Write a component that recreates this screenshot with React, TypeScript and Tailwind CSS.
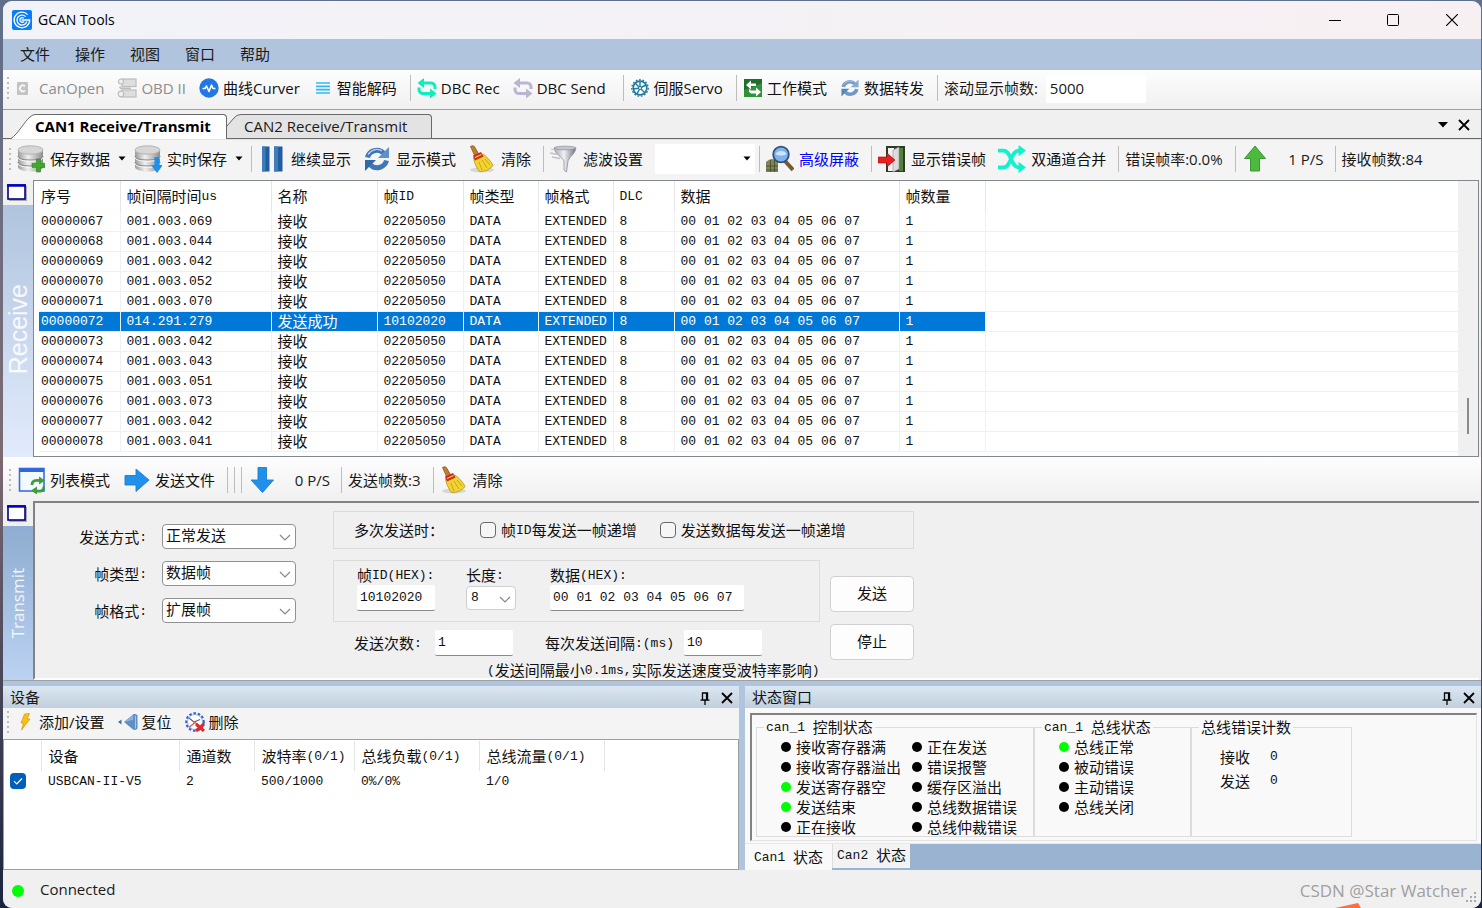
import { useState } from "react";
import type { ReactNode } from "react";

const UI = 'font-["Open_Sans","Noto_Sans_CJK_SC",sans-serif]';
const SIM = 'font-["Liberation_Mono","Noto_Sans_CJK_SC",monospace]';

/* ---------- small helpers ---------- */

// Chinese runs stay at 15px, latin runs drop to the narrow mono size
function Mixed({ text }: { text: string }) {
  const parts = text.split(/([\x20-\x7e]+)/).filter(Boolean);
  return (
    <span className="flex items-center whitespace-pre">
      {parts.map((p, i) =>
        /^[\x20-\x7e]/.test(p) ? (
          <span key={i} className="text-[13px] leading-4 pt-0.5">{p}</span>
        ) : (
          <span key={i} className='text-[15px] font-["Noto_Sans_CJK_SC",sans-serif]'>{p}</span>
        )
      )}
    </span>
  );
}

function Grip() {
  return (
    <div className="flex flex-col gap-[3px] shrink-0 w-1 mr-1">
      {[0, 1, 2, 3, 4].map((i) => (
        <span key={i} className="block w-[2px] h-[2px] bg-[#bdbdbd]" />
      ))}
    </div>
  );
}

function Sep({ wide }: { wide?: boolean }) {
  return <span className={`w-px h-[26px] bg-[#bdbdbd] shrink-0 mr-[6px] ${wide ? "ml-1" : ""}`} />;
}

function Tool({ icon, label, disabled, blue, big }: {
  icon: ReactNode;
  label: string;
  disabled?: boolean;
  blue?: boolean;
  big?: boolean;
}) {
  return (
    <button
      disabled={disabled}
      className={`flex items-center shrink-0 whitespace-nowrap ${big ? "gap-[5px] mr-3" : "gap-1 mr-[13px]"} ${
        disabled ? "text-[#8d8d8d]" : blue ? "text-[#0000ff]" : "text-[#111]"
      }`}
    >
      {icon}
      {label}
    </button>
  );
}

function Caret() {
  return (
    <svg width="8" height="5" viewBox="0 0 8 5" aria-hidden="true">
      <path d="M0.5 0.5h7L4 4.5z" fill="#000" />
    </svg>
  );
}

function CloseX({ size = 12 }: { size?: number }) {
  return (
    <svg width={size} height={size} viewBox="0 0 12 12" aria-hidden="true">
      <path d="M1 1l10 10M11 1L1 11" stroke="#000" strokeWidth="1.8" />
    </svg>
  );
}

/* ---------- icons ---------- */

const LogoIcon = () => (
  <svg width="20" height="20" viewBox="0 0 20 20">
    <rect width="20" height="20" rx="2" fill="#0a7cf5" />
    <g fill="none" stroke="#fff" strokeWidth="1.3">
      <path d="M15.600 4.600A7.800 7.800 0 1 0 17.700 10H9.500" />
      <path d="M13.600 6.600A5 5 0 1 0 14.800 11.500" />
      <path d="M11.800 8.300a2.300 2.300 0 1 0 .3 3" />
    </g>
  </svg>
);

const CanOpenIcon = () => (
  <svg width="20" height="20" viewBox="0 0 20 20">
    <rect x="2" y="4" width="11" height="13" rx="1" fill="#c2c2c2" />
    <path d="M10 8.200A3 3 0 1 0 10 12.600" fill="none" stroke="#f5f5f5" strokeWidth="2" />
  </svg>
);

const ObdIcon = () => (
  <svg width="20" height="20" viewBox="0 0 20 20" fill="#dedede" stroke="#bdbdbd" strokeWidth="1.200">
    <rect x="5" y="1" width="14" height="7.500" />
    <rect x="5" y="12" width="14" height="7" />
    <path d="M3 8.500c0 2 1 1.800 3 1.800h8" fill="none" strokeWidth="1.800" />
    <circle cx="4" cy="3.500" r="2.500" fill="#efefef" />
    <circle cx="4" cy="16" r="2.800" fill="#efefef" />
  </svg>
);

const CurveIcon = () => (
  <svg width="20" height="20" viewBox="0 0 20 20">
    <circle cx="10" cy="10" r="9.700" fill="#2376e5" />
    <path d="M3.500 10.500H6L7.500 8l2.500 5.500L12.500 7l1.500 3.500h2.500" fill="none" stroke="#fff" strokeWidth="1.600" strokeLinejoin="round" />
  </svg>
);

const LinesIcon = () => (
  <svg width="20" height="20" viewBox="0 0 20 20" stroke="#2fbaf5" strokeWidth="1.700">
    <path d="M3 5h14M3 8.300h14M3 11.600h14M3 15h14" />
  </svg>
);

const LoopIcon = ({ color }: { color: string }) => (
  <svg width="20" height="20" viewBox="0 0 20 20" fill="none" stroke={color} strokeWidth="3">
    <path d="M6 5h8a4 4 0 0 1 4 4v2" />
    <path d="M14 15.500H6a4 4 0 0 1-4-4V9.500" />
    <path d="M7 0v10L.5 5zM13 10.500v10l6.500-5z" fill={color} stroke="none" />
  </svg>
);

const ServoIcon = () => (
  <svg width="20" height="20" viewBox="0 0 20 20" fill="none" stroke="#1f7aa0">
    <rect x="1" y="1" width="18" height="18" fill="#fff" stroke="none" />
    <circle cx="10" cy="10" r="6.800" strokeWidth="1.700" />
    <circle cx="10" cy="10" r="8.200" strokeWidth="1.400" strokeDasharray="1.800 1.600" />
    <path d="M10 10V3M10 10l6-3M10 10l5 5M10 10l-3 6M10 10l-7 1M10 10L5 5" strokeWidth="1.400" />
    <circle cx="10" cy="10" r="1.500" fill="#fff" />
  </svg>
);

const WorkModeIcon = () => (
  <svg width="20" height="20" viewBox="0 0 20 20">
    <rect x="1" y="1" width="18" height="18" fill="#2f9338" />
    <path d="M1 1h18v4L1 12z" fill="#1f6e2b" />
    <path d="M3 7l5-4.500V5.500h5v2.500H8v3.500z" fill="#fff" />
    <path d="M18 14l-5-4.500v3H8L6 11v3l2 1.500h5V18.500z" fill="#fff" />
  </svg>
);

const SyncIcon = ({ size, light }: { size: number; light?: boolean }) => (
  <svg width={size} height={size} viewBox="0 0 28 28">
    <g fill="none" stroke={light ? "#6d97c6" : "#3f77b5"} strokeWidth="5">
      <path d="M4.500 12.500C6 6 15 2.500 20.500 8" />
      <path d="M23.500 15.500C22 22 13 25.500 7.500 20" />
    </g>
    <path d="M26 2v11H15z" fill={light ? "#86aad2" : "#5f90c6"} />
    <path d="M2 26V15h11z" fill={light ? "#5a86ba" : "#2f69aa"} />
    <path d="M5 9.500C9 4 15 3 19 6" fill="none" stroke="#b9d2ec" strokeWidth="1.300" />
  </svg>
);

const DatabaseIcon = ({ children }: { children: ReactNode }) => (
  <svg width="28" height="28" viewBox="0 0 28 28">
    <defs>
      <linearGradient id="disk" x1="0" x2="1">
        <stop offset="0" stopColor="#9a9a9a" />
        <stop offset=".4" stopColor="#efefef" />
        <stop offset="1" stopColor="#8e8e8e" />
      </linearGradient>
    </defs>
    <path d="M1 5v17c0 2.500 5.500 4.500 13 4.500S26 24.500 26 22V5z" fill="url(#disk)" />
    <g fill="none" stroke="#8a8a8a" strokeWidth="1.200">
      <path d="M1 11c0 2.500 5.500 4 12.500 4S26 13.500 26 11" />
      <path d="M1 17c0 2.500 5.500 4 12.500 4S26 19.500 26 17" />
    </g>
    <g fill="none" stroke="#fafafa">
      <path d="M1 12.300c0 2.500 5.500 4 12.500 4S26 14.800 26 12.300" />
      <path d="M1 18.300c0 2.500 5.500 4 12.500 4S26 20.800 26 18.300" />
    </g>
    <ellipse cx="13.500" cy="5" rx="12.500" ry="4.200" fill="#d6d6d6" stroke="#b4b4b4" />
    {children}
  </svg>
);

const PlusMark = () => <path d="M19.500 14h4v4.500H28v4h-4.500V27h-4v-4.500H15v-4h4.500z" fill="#41a82c" stroke="#2a8420" strokeWidth=".6" />;
const DownMark = () => <path d="M20.500 12h5v8H29l-6 8-6-8h3.500z" fill="#1f8fea" />;

const PauseIcon = () => (
  <svg width="28" height="28" viewBox="0 0 28 28">
    <rect x="4" y="1.500" width="7.500" height="25" fill="#235c9f" />
    <rect x="16" y="1.500" width="8.500" height="25" fill="#235c9f" />
    <path d="M4 1.500h3.500v25H4zM16 1.500h4v25h-4z" fill="#3f7cba" />
  </svg>
);

const BroomIcon = () => (
  <svg width="28" height="28" viewBox="0 0 28 28">
    <ellipse cx="14" cy="25" rx="12" ry="2.500" fill="#d6d6d6" />
    <path d="M2.500 1.500c2-1.500 4-.5 4.500 1l4 7-4 2z" fill="#c07f2c" stroke="#7c4d13" strokeWidth=".7" />
    <path d="M5.500 12.500L15 9c4 3 8 7 10 11.500-3 4-8 6-13.500 6C8 22 6 17 5.500 12.500z" fill="#f1d433" stroke="#b9930e" strokeWidth=".8" />
    <path d="M5 10.500L13 7l2.500 4.500L7 15.500z" fill="#cc2a22" />
    <path d="M7 12.500l6.500-3" stroke="#f1d433" strokeWidth="1.300" />
    <path d="M11 17l3 8M14 15l5 8M17 14l5 6" stroke="#c79d12" strokeWidth=".9" />
  </svg>
);

const FunnelIcon = () => (
  <svg width="28" height="28" viewBox="0 0 28 28">
    <defs>
      <linearGradient id="fun" x1="0" x2="1">
        <stop offset="0" stopColor="#a3a3b0" />
        <stop offset=".45" stopColor="#f0f0f5" />
        <stop offset="1" stopColor="#70707f" />
      </linearGradient>
    </defs>
    <path d="M4 3h22c-1 6-6 8-8 13l-1.500 11-2.500-2v-9C12 12 5 9 4 3z" fill="url(#fun)" stroke="#85858f" strokeWidth=".7" />
    <ellipse cx="15" cy="3" rx="11" ry="1.800" fill="#c6c6d2" stroke="#8c8c99" strokeWidth=".7" />
    <path d="M1 4l7 2M0 8l8 1.500M2 12l8 1.500" stroke="#c2c2cc" strokeWidth="1.300" />
  </svg>
);

const SearchNetIcon = () => (
  <svg width="28" height="28" viewBox="0 0 28 28">
    <path d="M0 17c4-4 9-4 12 0v10H0z" fill="#7f8556" />
    <path d="M0 21h12M4.500 15v12M8.500 15v12M0 25h12" stroke="#4a4f2c" strokeWidth=".9" />
    <path d="M19 16l8 9" stroke="#7a5836" strokeWidth="4" />
    <circle cx="15" cy="9.500" r="7.800" fill="#7db4ee" stroke="#34507c" strokeWidth="1.800" />
    <path d="M9.500 9a6 5 0 0 1 11 0c-3 2-8 2-11 0z" fill="#cfe5fb" />
  </svg>
);

const DoorIcon = () => (
  <svg width="28" height="28" viewBox="0 0 28 28">
    <rect x="8" y="1" width="19" height="26" fill="#2d3b25" />
    <rect x="21" y="3" width="4" height="23" fill="#54803f" />
    <path d="M10 3h6v23h-6z" fill="#f2f2f2" />
    <path d="M15 5l6-3v22l-6 3z" fill="#dcdcdc" stroke="#909090" strokeWidth=".6" />
    <path d="M0 12h9V8l8 7-8 7v-4H0z" fill="#e62020" stroke="#a70c0c" strokeWidth=".6" />
  </svg>
);

const ShuffleIcon = () => (
  <svg width="28" height="28" viewBox="0 0 30 30" fill="none" stroke="#12f0cd" strokeWidth="4">
    <path d="M0 6h6c8 0 8 18 16 18h2" />
    <path d="M0 24h6c8 0 8-18 16-18h2" />
    <path d="M22 0l8 6-8 6zM22 18l8 6-8 6z" fill="#12f0cd" stroke="none" />
  </svg>
);

const ArrowIcon = ({ dir, color, edge }: { dir: "up" | "down" | "right"; color: string; edge: string }) => {
  const d = {
    up: "M13 1l10.500 12.500h-6V26H8.500V13.500h-6z",
    down: "M10 1.500h8.500V14h7L14.500 26.500 3 14h7z",
    right: "M3 9.500h11V3l13 11L14 25.500V19H3z",
  }[dir];
  return (
    <svg width="28" height="28" viewBox="0 0 28 28">
      <path d={d} fill={color} stroke={edge} strokeWidth=".9" />
    </svg>
  );
};

const ListModeIcon = () => (
  <svg width="28" height="28" viewBox="0 0 28 28">
    <rect x="2.500" y="2.500" width="24.500" height="22.500" fill="#f4f8ff" stroke="#3a6fdc" strokeWidth="1.600" />
    <rect x="2.500" y="2.500" width="24.500" height="3.500" fill="#2e66dd" />
    <g fill="none" stroke="#3f9e3b" strokeWidth="2.800">
      <path d="M15 19c0-4 3-5 7-4.500" />
      <path d="M27 20.500c0 4-3 5-7 4.500" />
    </g>
    <path d="M22 10.500l6 4-6 4zM20 20.500l-6 4 6 4z" fill="#3f9e3b" />
  </svg>
);

const BoltIcon = () => (
  <svg width="20" height="20" viewBox="0 0 20 20">
    <path d="M9.500 2l5-.5L12 7h3L6.500 18 8.500 11H6z" fill="#f5c211" stroke="#d9930b" strokeWidth=".7" />
  </svg>
);

const ResetIcon = () => (
  <svg width="20" height="20" viewBox="0 0 20 20">
    <path d="M6 10l9-7.500c2-1 4 0 4.500 1v13c-.5 1-2.500 2-4.500 1z" fill="#5f8fc4" />
    <path d="M17.500 3.500v13" stroke="#a9c6e6" strokeWidth="1" />
    <path d="M0 10l3.500-2.500v5z" fill="#3f6ea8" />
    <path d="M6 10l9-7v5z" fill="#8db2dc" />
  </svg>
);

const DeleteIcon = () => (
  <svg width="20" height="20" viewBox="0 0 20 20">
    <circle cx="10" cy="10" r="7.500" fill="#fff" stroke="#9ab8e8" />
    <circle cx="10" cy="10" r="8.800" fill="none" stroke="#2c62d8" strokeWidth="2" strokeDasharray="2.600 1.800" />
    <path d="M4 6l5 4 6-2.500" fill="none" stroke="#666" strokeWidth="1.200" />
    <path d="M4 15.500l6-5 3 2.500" fill="none" stroke="#e46060" strokeWidth="1.600" />
    <path d="M11 12l8 7M19 12l-8 7" fill="none" stroke="#e02b2b" strokeWidth="3" />
  </svg>
);

const WindowIcon = () => (
  <svg width="20" height="17" viewBox="0 0 20 17">
    <rect x="2" y="2" width="18" height="15" fill="#a8a8a8" />
    <rect x="1" y="1" width="17" height="14" fill="#fff" stroke="#000080" strokeWidth="1.600" />
    <path d="M0 1.500h19" stroke="#0000c8" strokeWidth="2.400" />
  </svg>
);

const PinIcon = () => (
  <svg width="10" height="13" viewBox="0 0 10 13" fill="none" stroke="#000" strokeWidth="1.300">
    <path d="M2.500 1h5v7h-5zM0.500 8.200h9M5 8v5" />
    <path d="M6.700 1v7" strokeWidth="1.600" />
  </svg>
);

/* ---------- data ---------- */

const MENUS = ["文件", "操作", "视图", "窗口", "帮助"];

const HEADERS = ["序号", "帧间隔时间us", "名称", "帧ID", "帧类型", "帧格式", "DLC", "数据", "帧数量"];

const INTERVALS = [
  "001.003.069", "001.003.044", "001.003.042", "001.003.052", "001.003.070", "014.291.279",
  "001.003.042", "001.003.043", "001.003.051", "001.003.073", "001.003.042", "001.003.041",
];

const FRAMES = INTERVALS.map((time, i) => {
  const sent = i === 5;
  return {
    sent,
    cells: [
      `000000${67 + i}`, time, sent ? "发送成功" : "接收", sent ? "10102020" : "02205050",
      "DATA", "EXTENDED", "8", "00 01 02 03 04 05 06 07", "1",
    ],
  };
});

const CONTROL_STATES: [string, boolean][] = [
  ["接收寄存器满", false], ["正在发送", false],
  ["接收寄存器溢出", false], ["错误报警", false],
  ["发送寄存器空", true], ["缓存区溢出", false],
  ["发送结束", true], ["总线数据错误", false],
  ["正在接收", false], ["总线仲裁错误", false],
];

const BUS_STATES: [string, boolean][] = [
  ["总线正常", true], ["被动错误", false], ["主动错误", false], ["总线关闭", false],
];

/* ---------- sections ---------- */

function TitleBar() {
  return (
    <header className="h-[38px] shrink-0 flex items-center bg-linear-to-r from-[#f1f3f9] to-[#f7f0f3] pl-[9px]">
      <LogoIcon />
      <h1 className="text-[14px] ml-[6px] text-black">GCAN Tools</h1>
      <div className="ml-auto flex">
        <button aria-label="Minimize" className="w-[58px] flex justify-center items-center">
          <svg width="12" height="12"><path d="M0 6.500h12" stroke="#000" /></svg>
        </button>
        <button aria-label="Maximize" className="w-[58px] flex justify-center items-center">
          <svg width="12" height="12"><rect x=".5" y=".5" width="11" height="11" rx="1" fill="none" stroke="#000" /></svg>
        </button>
        <button aria-label="Close" className="w-[59px] flex justify-center items-center">
          <svg width="12" height="12"><path d="M0 0l12 12M12 0L0 12" stroke="#000" strokeWidth="1.200" /></svg>
        </button>
      </div>
    </header>
  );
}

function MainToolbar() {
  return (
    <div className="h-10 shrink-0 flex items-center pl-1 pb-[3px] bg-linear-to-b from-[#fdfdfd] to-[#f0f0f0] border-b border-[#a0a0a0]">
      <Grip />
      <Tool icon={<CanOpenIcon />} label="CanOpen" disabled />
      <Tool icon={<ObdIcon />} label="OBD II" disabled />
      <Tool icon={<CurveIcon />} label="曲线Curver" />
      <Tool icon={<LinesIcon />} label="智能解码" />
      <Sep />
      <Tool icon={<LoopIcon color="#0deebb" />} label="DBC Rec" />
      <Tool icon={<LoopIcon color="#b9b5d3" />} label="DBC Send" />
      <Sep wide />
      <Tool icon={<ServoIcon />} label="伺服Servo" />
      <Sep />
      <Tool icon={<WorkModeIcon />} label="工作模式" />
      <Tool icon={<SyncIcon size={20} light />} label="数据转发" />
      <Sep />
      <label htmlFor="limit" className="whitespace-nowrap mr-2">滚动显示帧数:</label>
      <input id="limit" defaultValue="5000" className="w-[100px] h-[29px] bg-white pl-1 text-[15px] outline-none" />
    </div>
  );
}

function DocTabs({ tab, onTab }: { tab: number; onTab: (n: number) => void }) {
  return (
    <div role="tablist" className="h-[29px] shrink-0 flex items-end bg-[#f0f0f0] border-b border-[#696969] pl-2">
      <svg width="24" height="25" viewBox="0 0 24 25" className="-mb-px shrink-0">
        <path d="M0 25C6 21 13 8 19 3q2-2 5-2.500V25z" fill="#fff" />
        <path d="M0 24.500C7 20 13 8 19 3q2-2 5-2.500" fill="none" stroke="#696969" />
      </svg>
      <button
        role="tab"
        aria-selected={tab === 0}
        onClick={() => onTab(0)}
        className="h-[25px] -mb-px w-[192px] pb-[3px] text-left font-bold bg-white border-t border-r border-[#696969] rounded-tr whitespace-nowrap text-black"
      >
        CAN1 Receive/Transmit
      </button>
      <svg width="14" height="24" viewBox="0 0 14 24" className="shrink-0">
        <path d="M0 12L7 4Q9.500.5 14 .5V24H0z" fill="#e3e3e3" />
        <path d="M0 12L7 4Q9.500.5 14 .5" fill="none" stroke="#696969" />
      </svg>
      <button
        role="tab"
        aria-selected={tab === 1}
        onClick={() => onTab(1)}
        className="h-6 w-[191px] pl-[3px] pb-0.5 text-left bg-[#e3e3e3] border-t border-r border-[#696969] rounded-tr whitespace-nowrap"
      >
        CAN2 Receive/Transmit
      </button>
      <div className="ml-auto h-full flex items-center gap-[10px] pr-[11px] pt-0.5">
        <button aria-label="Tab list">
          <svg width="10" height="6"><path d="M0 0h10L5 5.500z" fill="#000" /></svg>
        </button>
        <button aria-label="Close tab"><CloseX /></button>
      </div>
    </div>
  );
}

function ReceiveToolbar() {
  return (
    <div className="h-[41px] shrink-0 flex items-center pl-[6px] pb-[3px] bg-[#f4f4f4] border-t border-[#dbe5f1]">
      <Grip />
      <Tool big icon={<DatabaseIcon><PlusMark /></DatabaseIcon>} label="保存数据" />
      <button aria-label="保存数据选项" className="-ml-1 mr-2"><Caret /></button>
      <Tool big icon={<DatabaseIcon><DownMark /></DatabaseIcon>} label="实时保存" />
      <button aria-label="实时保存选项" className="-ml-1 mr-2"><Caret /></button>
      <Sep />
      <Tool big icon={<PauseIcon />} label="继续显示" />
      <Tool big icon={<SyncIcon size={28} />} label="显示模式" />
      <Tool big icon={<BroomIcon />} label="清除" />
      <Sep />
      <Tool big icon={<FunnelIcon />} label="滤波设置" />
      <div className="relative mr-1 shrink-0">
        <select aria-label="滤波设置" className="appearance-none w-[100px] h-[30px] bg-white block">
          <option></option>
        </select>
        <span className="absolute right-1 top-0 h-full flex items-center pointer-events-none"><Caret /></span>
      </div>
      <Sep />
      <Tool big icon={<SearchNetIcon />} label="高级屏蔽" blue />
      <Sep />
      <Tool big icon={<DoorIcon />} label="显示错误帧" />
      <Tool big icon={<ShuffleIcon />} label="双通道合并" />
      <Sep />
      <span className="whitespace-nowrap mr-3">错误帧率:0.0%</span>
      <Sep />
      <ArrowIcon dir="up" color="#4cbb3c" edge="#2f8f2a" />
      <span className="w-[54px] text-right whitespace-nowrap mr-[11px]">1 P/S</span>
      <Sep />
      <span className="whitespace-nowrap">接收帧数:84</span>
    </div>
  );
}

function ReceivePanel() {
  return (
    <section className="flex-1 flex bg-[#f0f0f0]">
      <aside className="w-[30px] shrink-0 flex flex-col">
        <div className="h-[25px] flex items-center pl-1"><WindowIcon /></div>
        <div className="flex-1 flex items-center justify-center pb-1 bg-linear-to-b from-[#b0c4de] to-[#e2ebfc]">
          <span className='[writing-mode:vertical-rl] rotate-180 font-["Liberation_Sans",sans-serif] text-[25px] leading-[30px] text-white/85'>Receive</span>
        </div>
      </aside>
      <div className={`flex-1 flex mr-0.5 bg-white border border-[#828790] ${SIM}`}>
        <div className="flex-1 pl-[5px]">
          <table className="w-full table-fixed border-collapse text-[#111]">
            <colgroup>
              <col className="w-[81px]" />
              <col className="w-[151px]" />
              <col className="w-[106px]" />
              <col className="w-[86px]" />
              <col className="w-[75px]" />
              <col className="w-[75px]" />
              <col className="w-[61px]" />
              <col className="w-[225px]" />
              <col className="w-[86px]" />
              <col />
            </colgroup>
            <thead>
              <tr className="h-[30px]">
                {HEADERS.map((h) => (
                  <th key={h} className="font-normal text-left pl-[6px] first:pl-0.5 border-r border-[#e5e5e5] leading-5">
                    <Mixed text={h} />
                  </th>
                ))}
                <td />
              </tr>
            </thead>
            <tbody>
              {FRAMES.map((f) => (
                <tr key={f.cells[0]} className="h-5 border-b border-[#f0f0f0]">
                  {f.cells.map((c, i) => (
                    <td
                      key={i}
                      className={`p-0 pl-[6px] first:pl-0.5 border-r leading-[18px] ${
                        f.sent ? "bg-[#0078d7] text-white border-[#e8f2fb]" : "border-[#f0f0f0]"
                      }`}
                    >
                      <Mixed text={c} />
                    </td>
                  ))}
                  <td />
                </tr>
              ))}
            </tbody>
          </table>
        </div>
        <div className="w-[20px] shrink-0 bg-[#f0f0f0] flex flex-col justify-end items-center pb-[22px]">
          <span className="block w-[2px] h-9 bg-[#8a8a8a]" />
        </div>
      </div>
    </section>
  );
}

function TransmitToolbar() {
  return (
    <div className="h-11 shrink-0 flex items-center pl-[6px] pt-px bg-linear-to-b from-[#fdfdfd] to-[#f0f0f0]">
      <Grip />
      <Tool big icon={<ListModeIcon />} label="列表模式" />
      <Tool big icon={<ArrowIcon dir="right" color="#2090ea" edge="#1a7fd3" />} label="发送文件" />
      <Sep />
      <Sep />
      <Sep />
      <ArrowIcon dir="down" color="#2090ea" edge="#1a7fd3" />
      <span className="w-[54px] text-right whitespace-nowrap mr-[11px]">0 P/S</span>
      <Sep />
      <span className="whitespace-nowrap mr-3">发送帧数:3</span>
      <Sep />
      <Tool big icon={<BroomIcon />} label="清除" />
    </div>
  );
}

function Picker({ id, value, small }: { id: string; value: string; small?: boolean }) {
  return (
    <div className={`relative ${small ? "w-[50px]" : "w-[134px]"}`}>
      <select
        id={id}
        className={`appearance-none block w-full bg-white border rounded-sm ${
          small
            ? "h-6 pl-1 text-[13px] border-[#cfcfcf]"
            : 'h-[25px] pl-[3px] pb-[3px] text-[15px] leading-5 border-[#919191] font-["Noto_Sans_CJK_SC",sans-serif]'
        }`}
      >
        <option>{value}</option>
      </select>
      <svg width="12" height="7" viewBox="0 0 12 7" className="absolute right-[5px] top-[10px] pointer-events-none">
        <path d="M1 1l5 5 5-5" fill="none" stroke="#888" strokeWidth="1.200" />
      </svg>
    </div>
  );
}

function Field({ id, value, width }: { id: string; value: string; width: string }) {
  return (
    <input
      id={id}
      defaultValue={value}
      className={`${width} h-[26px] block bg-white border-b border-[#8a8a8a] rounded-xs pl-[3px] text-[13px] outline-none`}
    />
  );
}

function Tick({ label }: { label: string }) {
  return (
    <label className="flex items-center gap-[5px] whitespace-nowrap">
      <input type="checkbox" className="appearance-none w-4 h-4 border border-[#6a6a6a] rounded bg-[#f6f6f6]" />
      <Mixed text={label} />
    </label>
  );
}

function TransmitPanel() {
  const btn = "w-[84px] h-9 flex items-center justify-center pb-0.5 bg-[#fdfdfd] border border-[#d0d0d0] rounded";
  return (
    <section className="h-[179px] shrink-0 flex bg-[#f0f0f0]">
      <aside className="w-[30px] shrink-0 flex flex-col">
        <div className="h-[25px] flex items-center pl-1"><WindowIcon /></div>
        <div className="flex-1 flex items-center justify-center bg-linear-to-b from-[#8eadd0] to-[#bcd2f2]">
          <span className="[writing-mode:vertical-rl] rotate-180 text-[17px] leading-[30px] text-white/85">Transmit</span>
        </div>
      </aside>
      <div className={`flex-1 mr-0.5 border-t-2 border-l-2 border-b-2 border-t-[#828282] border-l-[#828282] border-b-[#fdfdfd] flex items-start overflow-hidden text-[#111] ${SIM}`}>
        <div className="w-[261px] mt-[21px] grid grid-cols-[112px_134px] gap-x-[15px] gap-y-3 items-center">
          <label htmlFor="mode" className="justify-self-end"><Mixed text="发送方式:" /></label>
          <Picker id="mode" value="正常发送" />
          <label htmlFor="ftype" className="justify-self-end"><Mixed text="帧类型:" /></label>
          <Picker id="ftype" value="数据帧" />
          <label htmlFor="fformat" className="justify-self-end"><Mixed text="帧格式:" /></label>
          <Picker id="fformat" value="扩展帧" />
        </div>

        <div className="ml-[37px] mt-2">
          <div className="w-[581px] h-[38px] border border-[#dcdcdc] flex items-center pl-5 gap-[23px]">
            <span className="w-[103px]"><Mixed text="多次发送时：" /></span>
            <Tick label="帧ID每发送一帧递增" />
            <Tick label="发送数据每发送一帧递增" />
          </div>
          <div className="flex mt-[11px]">
            <div className="w-[487px]">
              <div className="h-[62px] border border-[#dcdcdc] pl-[23px] pt-1 flex">
                <div className="w-[109px]">
                  <label htmlFor="fid" className="block leading-5"><Mixed text="帧ID(HEX):" /></label>
                  <Field id="fid" value="10102020" width="w-[78px]" />
                </div>
                <div className="w-[84px]">
                  <label htmlFor="len" className="block leading-5 mb-px"><Mixed text="长度:" /></label>
                  <Picker id="len" value="8" small />
                </div>
                <div>
                  <label htmlFor="data" className="block leading-5"><Mixed text="数据(HEX):" /></label>
                  <Field id="data" value="00 01 02 03 04 05 06 07" width="w-[194px]" />
                </div>
              </div>
              <div className="flex items-center pl-[21px] mt-2">
                <label htmlFor="times" className="w-[81px]"><Mixed text="发送次数:" /></label>
                <Field id="times" value="1" width="w-[78px]" />
                <label htmlFor="gap" className="ml-8 mr-[10px]"><Mixed text="每次发送间隔:(ms)" /></label>
                <Field id="gap" value="10" width="w-[78px]" />
              </div>
              <p className="pl-[154px] mt-1 leading-5"><Mixed text="(发送间隔最小0.1ms,实际发送速度受波特率影响)" /></p>
            </div>
            <div className="ml-[10px] mt-4 flex flex-col gap-3">
              <button className={btn}><Mixed text="发送" /></button>
              <button className={btn}><Mixed text="停止" /></button>
            </div>
          </div>
        </div>
      </div>
    </section>
  );
}

function DockHeader({ title }: { title: string }) {
  return (
    <div className="h-[22px] shrink-0 flex items-center pl-[7px] pr-[6px] bg-linear-to-b from-[#dbe7f3] to-[#c1cfdc]">
      <h2>{title}</h2>
      <div className="ml-auto flex items-center gap-[11px] pt-0.5">
        <button aria-label="Pin"><PinIcon /></button>
        <button aria-label="Close"><CloseX /></button>
      </div>
    </div>
  );
}

function DevicePanel() {
  const cols = ["设备", "通道数", "波特率(0/1)", "总线负载(0/1)", "总线流量(0/1)"];
  const row = ["USBCAN-II-V5", "2", "500/1000", "0%/0%", "1/0"];
  return (
    <section className="flex-1 flex flex-col">
      <DockHeader title="设备" />
      <div className="h-[31px] shrink-0 flex items-center pl-1 bg-[#f4f4f4] pb-[3px]">
        <Grip />
        <Tool icon={<BoltIcon />} label="添加/设置" />
        <Tool icon={<ResetIcon />} label="复位" />
        <Tool icon={<DeleteIcon />} label="删除" />
      </div>
      <div className={`flex-1 bg-white border border-[#9a9fa6] pt-px ${SIM}`}>
        <table className="w-full table-fixed border-collapse text-[#111]">
          <colgroup>
            <col className="w-[37px]" />
            <col className="w-[138px]" />
            <col className="w-[75px]" />
            <col className="w-[100px]" />
            <col className="w-[125px]" />
            <col className="w-[125px]" />
            <col />
          </colgroup>
          <thead>
            <tr className="h-[30px]">
              <td className="border-r border-[#e5e5e5]" />
              {cols.map((c) => (
                <th key={c} className="font-normal text-left pl-[7px] border-r border-[#e5e5e5] leading-5">
                  <Mixed text={c} />
                </th>
              ))}
              <td />
            </tr>
          </thead>
          <tbody>
            <tr className="h-5">
              <td className="p-0 pl-[6px]">
                <span className="relative block w-4 h-4">
                  <input
                    type="checkbox"
                    defaultChecked
                    aria-label="USBCAN-II-V5"
                    className="appearance-none block w-4 h-4 rounded bg-[#005fb8]"
                  />
                  <svg width="16" height="16" className="absolute inset-0 pointer-events-none">
                    <path d="M4 8.200l2.800 2.800L12 5.500" fill="none" stroke="#fff" strokeWidth="1.200" />
                  </svg>
                </span>
              </td>
              {row.map((c) => (
                <td key={c} className="p-0 pl-[7px] leading-5"><Mixed text={c} /></td>
              ))}
              <td />
            </tr>
          </tbody>
        </table>
      </div>
    </section>
  );
}

function Lamp({ label, on }: { label: string; on: boolean }) {
  return (
    <li className="flex items-center gap-[5px] h-5 whitespace-nowrap">
      <span className={`w-[10px] h-[10px] rounded-full shrink-0 ${on ? "bg-[#00ff00]" : "bg-black"}`} />
      <Mixed text={label} />
    </li>
  );
}

function StatusPanel() {
  const box = "border border-[#dcdcdc] h-[120px] leading-5";
  return (
    <section className={`flex-1 flex flex-col bg-[#f9f9f9] text-[#111] ${SIM}`}>
      <div className={UI}><DockHeader title="状态窗口" /></div>
      <div className="flex-1 mt-[5px] mb-0.5 ml-[5px] mr-1 border-t-2 border-l-2 border-t-[#828282] border-l-[#828282] border-r border-b border-r-[#e3e3e3] border-b-[#e3e3e3] flex pl-1 pt-0.5">
        <fieldset className={`${box} w-[278px]`}>
          <legend className="ml-[7px] px-0.5 h-5"><Mixed text="can_1 控制状态" /></legend>
          <ul className="grid grid-cols-[131px_1fr] pl-6">
            {CONTROL_STATES.map(([label, on]) => <Lamp key={label} label={label} on={on} />)}
          </ul>
        </fieldset>
        <fieldset className={`${box} w-[157px]`}>
          <legend className="ml-[7px] px-0.5 h-5"><Mixed text="can_1 总线状态" /></legend>
          <ul className="pl-6">
            {BUS_STATES.map(([label, on]) => <Lamp key={label} label={label} on={on} />)}
          </ul>
        </fieldset>
        <fieldset className={`${box} w-[161px]`}>
          <legend className="ml-[7px] px-0.5 h-5"><Mixed text="总线错误计数" /></legend>
          <dl className="grid grid-cols-[50px_1fr] pl-7 pt-[10px] gap-y-1">
            <dt><Mixed text="接收" /></dt>
            <dd><Mixed text="0" /></dd>
            <dt><Mixed text="发送" /></dt>
            <dd><Mixed text="0" /></dd>
          </dl>
        </fieldset>
      </div>
      <div role="tablist" className="h-[27px] shrink-0 flex items-start bg-[#99b3d1] border-t border-[#e8e8e8]">
        <button role="tab" aria-selected="true" className="w-[87px] h-[26px] flex items-center justify-center bg-[#f9f9f9]"><Mixed text="Can1 状态" /></button>
        <button role="tab" aria-selected="false" className="w-[78px] h-6 flex items-center justify-center pb-0.5 bg-[#f3f3f3] border-l border-[#dcdcdc]"><Mixed text="Can2 状态" /></button>
      </div>
    </section>
  );
}

function StatusBar() {
  return (
    <footer className="relative h-[38px] shrink-0 flex items-center bg-[#f0f0f0] pl-[9px] pr-[14px] overflow-hidden">
      <span className="w-3 h-3 rounded-full bg-[#00ff00] mt-1" />
      <span className="ml-4">Connected</span>
      <span className="ml-auto pt-1 text-[17px] text-[#a0a0a0]">CSDN @Star Watcher</span>
      <svg width="12" height="12" className="absolute right-1 bottom-1" fill="#a8a8a8">
        <path d="M9 0h2v2H9zM5 4h2v2H5zM9 4h2v2H9zM1 8h2v2H1zM5 8h2v2H5zM9 8h2v2H9z" />
      </svg>
      <svg width="26" height="5" className="absolute right-[120px] bottom-0">
        <path d="M0 5L23 0l3 5z" fill="#fb7240" />
      </svg>
    </footer>
  );
}

export default function App() {
  const [tab, setTab] = useState(0);

  return (
    <div className={`min-h-screen flex flex-col pt-px pl-[3px] pr-px bg-linear-to-b from-[#5f6f8c] via-[#7c6a72] to-[#1b2440] text-[15px] leading-5 text-[#1a1a1a] ${UI}`}>
      <main className="flex-1 flex flex-col rounded-[9px] overflow-hidden bg-[#b0c4de]">
        <TitleBar />
        <nav className="h-[31px] shrink-0 flex items-center gap-[25px] pl-[17px] pb-px bg-[#b0c4de]">
          {MENUS.map((m) => <button key={m}>{m}</button>)}
        </nav>
        <MainToolbar />
        <DocTabs tab={tab} onTab={setTab} />
        <ReceiveToolbar />
        <ReceivePanel />
        <TransmitToolbar />
        <TransmitPanel />
        <div className="h-[6px] shrink-0 border-t border-[#a0a0a0] bg-[#b0c4de]" />
        <div className="h-[184px] shrink-0 flex gap-[6px]">
          <DevicePanel />
          <StatusPanel />
        </div>
        <StatusBar />
      </main>
    </div>
  );
}
